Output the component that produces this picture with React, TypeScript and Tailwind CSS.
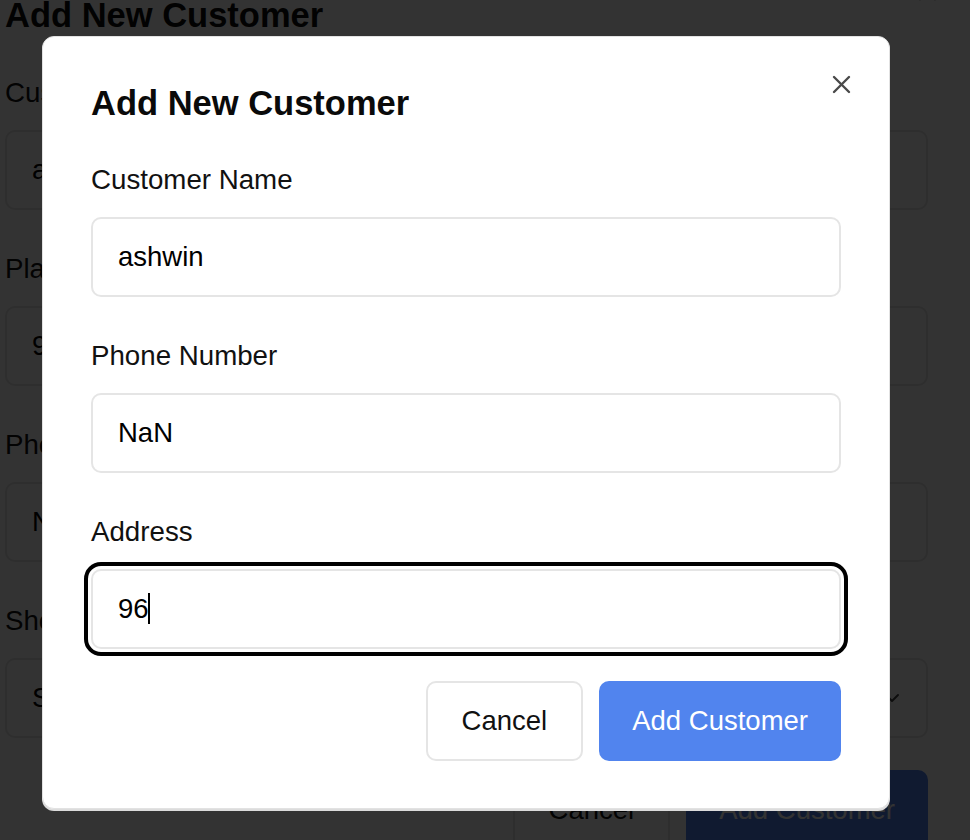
import { ChevronDown } from 'lucide-react';

type FieldProps = {
  label: string;
  value: string;
  focused?: boolean;
  select?: boolean;
};

function CloseIcon() {
  return (
    <svg width="19" height="19" viewBox="0 0 19 19" fill="none" stroke="currentColor" strokeWidth="2.4" strokeLinecap="round">
      <line x1="2" y1="2" x2="17" y2="17" />
      <line x1="17" y1="2" x2="2" y2="17" />
    </svg>
  );
}

function Field({ label, value, focused, select }: FieldProps) {
  return (
    <div className="flex flex-col gap-[17px]">
      <label className="text-[27.7px] leading-[41px] text-[#111]">{label}</label>
      <div className="relative">
        <input
          defaultValue={value}
          readOnly
          className={
            focused
              ? 'h-[80px] w-full rounded-[10px] border-2 border-[#e5e5e5] bg-white px-[25px] text-[27.5px] text-black caret-transparent outline-4 outline-offset-3 outline-black'
              : 'h-[80px] w-full rounded-[10px] border-2 border-[#e5e5e5] bg-white px-[25px] text-[27.5px] text-black outline-none'
          }
        />
        {focused && <span className="absolute left-[57px] top-[24px] h-[31px] w-[2px] bg-black" />}
        {select && (
          <ChevronDown className="absolute right-[24px] top-[28px] text-[#444]" size={24} strokeWidth={2} />
        )}
      </div>
    </div>
  );
}

function Buttons() {
  return (
    <div className="mt-[32px] flex justify-end gap-4">
      <button className="h-[80px] rounded-[10px] border-2 border-[#e5e5e5] bg-white px-[34px] text-[27.5px] text-[#111]">
        Cancel
      </button>
      <button className="h-[80px] rounded-[10px] bg-[#5184ee] px-[33px] text-[27.5px] text-white">
        Add Customer
      </button>
    </div>
  );
}

export default function App() {
  return (
    <div className="relative h-[840px] w-full overflow-hidden bg-white font-['Liberation_Sans',Arial,sans-serif]">
      {/* page behind the dialog */}
      <div className="relative pl-[5px] pr-[42px]">
        <h2 className="-mt-[5px] text-[34.5px] font-bold leading-[40px] text-[#0a0a0a]">Add New Customer</h2>
        <button className="absolute right-[33px] top-[-13px] text-[#222]">
          <CloseIcon />
        </button>
        <div className="mt-[37px] flex flex-col gap-[38px]">
          <Field label="Customer Name" value="ashwin" />
          <Field label="Place" value="96" />
          <Field label="Phone Number" value="NaN" />
          <Field label="Shop" value="Select shop" select />
        </div>
        <Buttons />
      </div>

      <div className="absolute inset-0 bg-black/80" />

      <div className="absolute left-[42px] top-[36px] w-[848px] rounded-[12px] border border-[#e2e2e2] bg-white px-[48px] pb-[47px] pt-[46px] shadow-[0_2px_0_#dcdcdc]">
        <button className="absolute right-[38px] top-[38px] text-[#4a4a4a]">
          <CloseIcon />
        </button>
        <h2 className="text-[34.5px] font-bold leading-[40px] text-[#0a0a0a]">Add New Customer</h2>
        <div className="mt-[36px] flex flex-col gap-[38px]">
          <Field label="Customer Name" value="ashwin" />
          <Field label="Phone Number" value="NaN" />
          <Field label="Address" value="96" focused />
        </div>
        <Buttons />
      </div>
    </div>
  );
}
